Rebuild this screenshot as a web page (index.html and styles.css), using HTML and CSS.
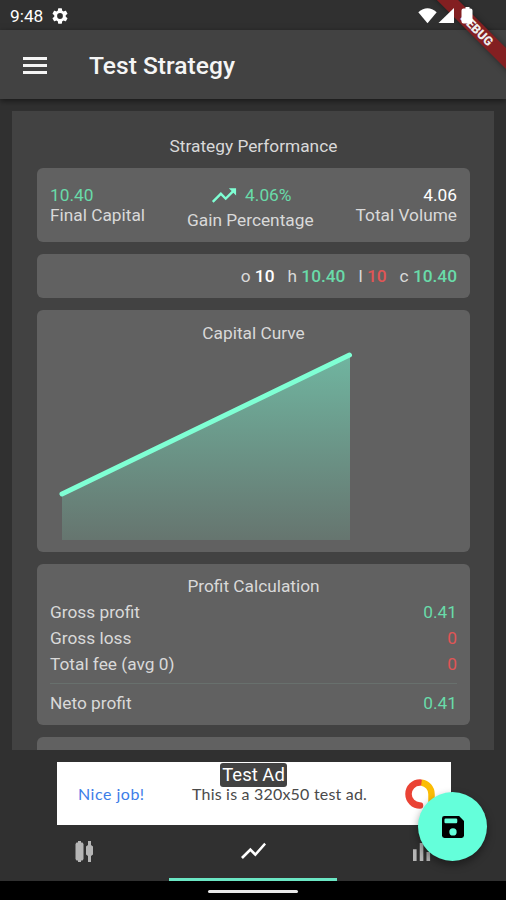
FILE: index.html
```html
<!DOCTYPE html>
<html lang="en">
<head>
  <meta charset="UTF-8" />
  <meta name="viewport" content="width=device-width, initial-scale=1.0"/>
  <title>Test Strategy</title>
  <link rel="stylesheet" href="styles.css">
</head>
<body>

  <div class="status-bar">
    <span class="clock">9:48</span>
    <svg class="gear" viewBox="2 2 20 20"><path d="M19.14 12.94c.04-.3.06-.61.06-.94s-.02-.64-.07-.94l2.03-1.58a.5.5 0 0 0 .12-.61l-1.92-3.32a.49.49 0 0 0-.59-.22l-2.39.96a7 7 0 0 0-1.62-.94l-.36-2.54a.48.48 0 0 0-.48-.41h-3.84a.48.48 0 0 0-.47.41l-.36 2.54c-.59.24-1.13.57-1.62.94l-2.39-.96a.48.48 0 0 0-.59.22L2.74 8.87a.48.48 0 0 0 .12.61l2.03 1.58c-.05.3-.09.63-.09.94s.02.64.07.94l-2.03 1.58a.5.5 0 0 0-.12.61l1.92 3.32c.12.22.37.29.59.22l2.39-.96c.5.38 1.03.7 1.62.94l.36 2.54c.05.24.24.41.48.41h3.84c.24 0 .44-.17.47-.41l.36-2.54a7 7 0 0 0 1.62-.94l2.39.96c.22.08.47 0 .59-.22l1.92-3.32a.48.48 0 0 0-.12-.61l-2.01-1.58zM12 15.6a3.6 3.6 0 1 1 0-7.2 3.6 3.6 0 0 1 0 7.2z"/></svg>
    <svg class="signals" viewBox="0 0 56 18">
      <path d="M0.3 5.2Q9.5-2.6 18.7 5.2L9.5 16.2z"/>
      <path d="M36 1v15H20.500z"/>
      <path d="M47.500 0h4v1.500h1a2 2 0 0 1 2 2v11a2 2 0 0 1-2 2h-7a2 2 0 0 1-2-2V3.500a2 2 0 0 1 2-2h2z"/>
    </svg>
  </div>
  <div class="debug-banner">DEBUG</div>

  <div class="app-bar">
    <svg class="menu" viewBox="0 0 24 17"><path d="M0 0h24v3H0zM0 7h24v3H0zM0 14h24v3H0z"/></svg>
    <h1>Test Strategy</h1>
  </div>

  <div class="content">
    <div class="panel">
      <h2>Strategy Performance</h2>

      <div class="card stats">
        <div class="stat">
          <span class="green">10.40</span>
          <span>Final Capital</span>
        </div>
        <div class="stat gain">
          <span class="gain-value green">
            <svg viewBox="0 0 24 24"><path d="M16 6l2.290 2.290-4.880 4.880-4-4L2 16.590 3.410 18l6-6 4 4 6.300-6.290L22 12V6z"/></svg>
            4.06%
          </span>
          <span>Gain Percentage</span>
        </div>
        <div class="stat right">
          <span class="white">4.06</span>
          <span>Total Volume</span>
        </div>
      </div>

      <div class="card ohlc">
        <span>o <b class="white">10</b></span>
        <span>h <b class="green">10.40</b></span>
        <span>l <b class="red">10</b></span>
        <span>c <b class="green">10.40</b></span>
      </div>

      <div class="card curve">
        <h3>Capital Curve</h3>
        <svg class="chart" viewBox="0 0 432 200">
          <defs>
            <linearGradient id="fill" x1="0" y1="0" x2="0" y2="1">
              <stop offset="0" stop-color="#70b5a0"/>
              <stop offset="1" stop-color="#66756f"/>
            </linearGradient>
          </defs>
          <path d="M25 145L313 6V191H25z" fill="url(#fill)"/>
          <path d="M25 145L312.500 6" stroke="#7fffd4" stroke-width="5" stroke-linecap="round"/>
        </svg>
      </div>

      <div class="card profit">
        <h3>Profit Calculation</h3>
        <div class="row"><span>Gross profit</span><span class="green">0.41</span></div>
        <div class="row"><span>Gross loss</span><span class="red">0</span></div>
        <div class="row"><span>Total fee (avg 0)</span><span class="red">0</span></div>
        <hr>
        <div class="row"><span>Neto profit</span><span class="green">0.41</span></div>
      </div>

      <div class="card next"></div>
    </div>
  </div>

  <div class="ad">
    <span class="ad-label">Test Ad</span>
    <span class="ad-link">Nice job!</span>
    <span class="ad-text">This is a 320x50 test ad.</span>
    <svg class="ad-logo" viewBox="0 0 30 30">
      <path class="orange" d="M15 3.500a11.500 11.500 0 0 0 0 23"/>
      <path class="yellow" d="M16.500 3.600a11.500 11.500 0 0 1 10 11.400v10"/>
    </svg>
  </div>

  <div class="tabs">
    <div class="tab">
      <svg class="candles" viewBox="0 0 18 21"><path d="M3 0h3v1.500h1.500L8.500 3v15l-1 1.500H6V21H3v-1.500H1.500L.5 18V3l1-1.500H3zM13 0h3v4l2 1.500v8L16 15v6h-3v-6l-2-1.500v-8L13 4z"/></svg>
    </div>
    <div class="tab active">
      <svg class="line" viewBox="2 5 20 15"><path d="M3.500 18.490l6-6.010 4 4L22 6.920l-1.410-1.410-7.090 7.970-4-4L2 16.990z"/></svg>
    </div>
    <div class="tab">
      <svg class="bars" viewBox="0 0 20 20"><path d="M0 7h4v13H0zM7.500 0h4v20h-4zM15 10h4v10h-4z"/></svg>
    </div>
  </div>

  <div class="system-nav"><span></span></div>

  <button class="fab">
    <svg viewBox="3 3 18 18"><path d="M17 3H5a2 2 0 0 0-2 2v14a2 2 0 0 0 2 2h14a2 2 0 0 0 2-2V7z"/><rect class="hole" x="5" y="5" width="10.500" height="4" rx="1"/><circle class="hole" cx="12" cy="16" r="3"/></svg>
  </button>

</body>
</html>
```
FILE: styles.css
```css
* {
  box-sizing: border-box;
}
body {
  font-family: Roboto, sans-serif;
  font-size: 17.3px;
  line-height: 20px;
  color: #d9d9d9;
  background: #303030;
  margin: 0;
  height: 900px;
  display: flex;
  flex-direction: column;
  overflow: hidden;
}
svg {
  display: block;
  fill: currentColor;
}
h1, h2, h3 {
  margin: 0;
  font-weight: 400;
}
.status-bar {
  height: 30px;
  flex-shrink: 0;
  display: flex;
  align-items: center;
  padding: 1px 32px 0 10px;
  color: #fff;
}
.clock {
  width: 42px;
}
.gear {
  width: 16px;
  height: 16px;
}
.signals {
  position: relative;
  z-index: 3;
  width: 56px;
  height: 18px;
  margin-left: auto;
}
.debug-banner {
  position: absolute;
  z-index: 2;
  left: 417px;
  top: 22px;
  width: 120px;
  height: 15px;
  line-height: 15px;
  text-align: center;
  font-size: 12.5px;
  font-weight: 900;
  color: #eee;
  background: #831f21;
  box-shadow: 0 0 6px rgba(0, 0, 0, 0.4);
  transform: rotate(45deg);
}
.app-bar {
  height: 69px;
  flex-shrink: 0;
  display: flex;
  align-items: center;
  padding: 2px 0 0 23px;
  gap: 42px;
  color: #f5f5f5;
  background: #424242;
  box-shadow: 0 2px 6px rgba(0, 0, 0, 0.5);
}
.menu {
  width: 24px;
  height: 17px;
}
.app-bar h1 {
  font-size: 24.6px;
  line-height: 30px;
  font-weight: 500;
}
.content {
  height: 651px;
  flex-shrink: 0;
  padding: 12px 12px 0;
}
.panel {
  height: 639px;
  overflow: hidden;
  padding: 25px 24px 0 25px;
  background: #424242;
}
h2, h3 {
  font-size: 17.3px;
  line-height: 20px;
  text-align: center;
}
.card {
  margin-top: 12px;
  padding: 12px 13px;
  border-radius: 6px;
  background: #616161;
}
.green {
  color: #69dba9;
}
.red {
  color: #e05555;
}
.white {
  color: #fff;
}
.stats {
  height: 74px;
  display: flex;
  justify-content: space-between;
  align-items: center;
}
.stat {
  display: flex;
  flex-direction: column;
}
.stat.gain {
  align-items: center;
}
.stat.right {
  align-items: flex-end;
}
.gain-value {
  display: flex;
  align-items: center;
  gap: 6px;
}
.gain-value svg {
  width: 30px;
  height: 29px;
  color: #7fffd4;
}
.ohlc {
  height: 44px;
  display: flex;
  justify-content: flex-end;
  align-items: center;
  gap: 13px;
}
.ohlc b {
  font-weight: 500;
}
.curve {
  height: 242px;
  padding: 13px 0 0;
}
.chart {
  width: 432px;
  height: 200px;
  margin-top: 6px;
}
.profit {
  height: 161px;
}
.profit .row {
  display: flex;
  justify-content: space-between;
  height: 26px;
  padding-top: 6px;
}
.profit hr {
  height: 1px;
  margin: 9px 0 3px;
  border: 0;
  background: #68706d;
}
.next {
  height: 60px;
}
.ad {
  position: relative;
  width: 394px;
  height: 63px;
  flex-shrink: 0;
  margin: 12px 0 0 57px;
  padding: 0 16px 0 21px;
  display: flex;
  align-items: center;
  font-family: Lato, sans-serif;
  font-size: 16px;
  line-height: 14px;
  letter-spacing: 0.2px;
  color: #4a4a4a;
  background: #fff;
}
.ad-label {
  position: absolute;
  left: 163px;
  top: 1px;
  width: 67px;
  height: 24px;
  border-radius: 3px;
  font-family: Roboto, sans-serif;
  font-size: 18.5px;
  line-height: 25px;
  letter-spacing: 0;
  text-align: center;
  color: #fff;
  background: #424242;
}
.ad-link {
  width: 114px;
  letter-spacing: 0.5px;
  color: #3c7de8;
}
.ad-logo {
  width: 30px;
  height: 30px;
  margin-left: auto;
}
.ad-logo path {
  fill: none;
  stroke-width: 6.5;
}
.yellow {
  stroke: #fbbc04;
}
.orange {
  stroke: #ea4335;
  stroke-linecap: round;
}
.tabs {
  height: 56px;
  flex-shrink: 0;
  display: flex;
}
.tab {
  flex: 1;
  display: flex;
  justify-content: center;
  align-items: center;
  color: #b5b5b5;
  border-bottom: 3px solid transparent;
}
.tab.active {
  color: #fff;
  border-color: #6be6c4;
}
.candles {
  width: 18px;
  height: 21px;
}
.line {
  width: 25px;
  height: 19px;
}
.bars {
  width: 18px;
  height: 18px;
}
.system-nav {
  height: 19px;
  flex-shrink: 0;
  display: flex;
  justify-content: center;
  align-items: center;
  padding-top: 2px;
  background: #000;
}
.system-nav span {
  width: 90px;
  height: 3px;
  border-radius: 2px;
  background: #e8e8e8;
}
.fab {
  position: absolute;
  left: 418px;
  top: 792px;
  width: 69px;
  height: 69px;
  padding: 0;
  display: flex;
  justify-content: center;
  align-items: center;
  border: 0;
  border-radius: 50%;
  color: #000;
  background: #64ffda;
  box-shadow: 0 4px 8px rgba(0, 0, 0, 0.4);
}
.fab svg {
  width: 22px;
  height: 22px;
}
.fab .hole {
  fill: #64ffda;
}
```
